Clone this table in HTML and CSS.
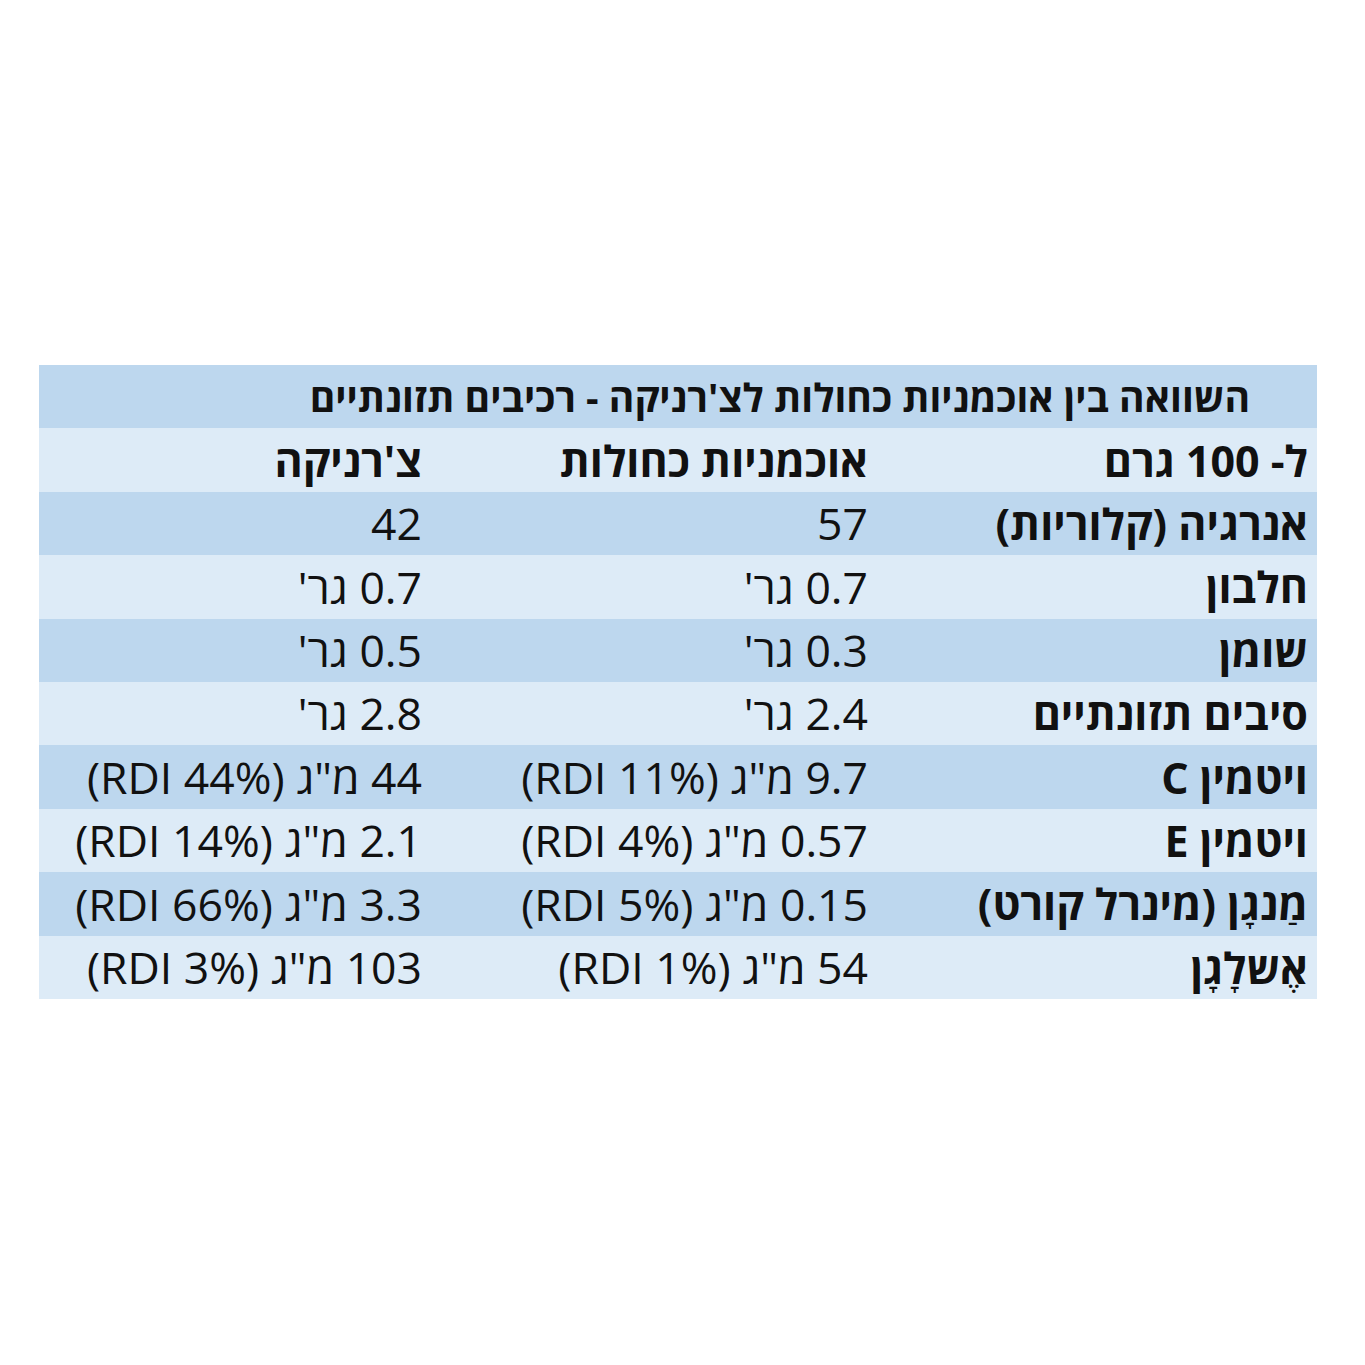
FILE: index.html
```html
<!DOCTYPE html>
<html lang="he" dir="rtl">
<head>
<meta charset="utf-8">
<link rel="stylesheet" href="styles.css">
<title>השוואה</title>
</head>
<body>
<div class="page">
  <table class="nutr">
    <colgroup>
      <col class="c1"><col class="c2"><col class="c3">
    </colgroup>
    <tr class="dark title-row"><td colspan="3" class="title">השוואה בין אוכמניות כחולות לצ'רניקה - רכיבים תזונתיים</td></tr>
    <tr class="light head"><td>ל- 100 גרם</td><td>אוכמניות כחולות</td><td>צ'רניקה</td></tr>
    <tr class="dark"><td class="lbl">אנרגיה (קלוריות)</td><td class="val">57</td><td class="val">42</td></tr>
    <tr class="light"><td class="lbl">חלבון</td><td class="val">0.7 גר'</td><td class="val">0.7 גר'</td></tr>
    <tr class="dark"><td class="lbl">שומן</td><td class="val">0.3 גר'</td><td class="val">0.5 גר'</td></tr>
    <tr class="light"><td class="lbl">סיבים תזונתיים</td><td class="val">2.4 גר'</td><td class="val">2.8 גר'</td></tr>
    <tr class="dark"><td class="lbl">ויטמין C</td><td class="val">9.7 מ"ג (RDI 11%)</td><td class="val">44 מ"ג (RDI 44%)</td></tr>
    <tr class="light"><td class="lbl">ויטמין E</td><td class="val">0.57 מ"ג (RDI 4%)</td><td class="val">2.1 מ"ג (RDI 14%)</td></tr>
    <tr class="dark"><td class="lbl">מַנגָן (מינרל קורט)</td><td class="val">0.15 מ"ג (RDI 5%)</td><td class="val">3.3 מ"ג (RDI 66%)</td></tr>
    <tr class="light"><td class="lbl">אֶשלָגָן</td><td class="val">54 מ"ג (RDI 1%)</td><td class="val">103 מ"ג (RDI 3%)</td></tr>
  </table>
</div>
</body>
</html>
```
FILE: styles.css
```css
html, body {
  margin: 0;
  padding: 0;
  background: #ffffff;
}
.page {
  padding-top: 365px;
  padding-right: 48px;
  padding-left: 39px;
  direction: rtl;
}
.nutr {
  width: 1278px;
  border-collapse: collapse;
  table-layout: fixed;
  font-family: "Open Sans", "DejaVu Sans", sans-serif;
  font-size: 43px;
  color: #111111;
}
.c1 { width: 440px; }
.c2 { width: 446px; }
.c3 { width: 392px; }
.nutr td {
  height: 63.4px;
  padding: 0 9px 0 0;
  text-align: right;
  vertical-align: middle;
  white-space: nowrap;
  line-height: 1;
  box-sizing: border-box;
}
.dark { background: #bdd7ee; }
.light { background: #ddebf7; }
.nutr td.title {
  font-size: 39px;
  font-weight: 700;
  padding-right: 67px;
}
.head td { font-weight: 700; }
.lbl { font-weight: 700; }
.nutr td.val { font-size: 44.5px; }
```
